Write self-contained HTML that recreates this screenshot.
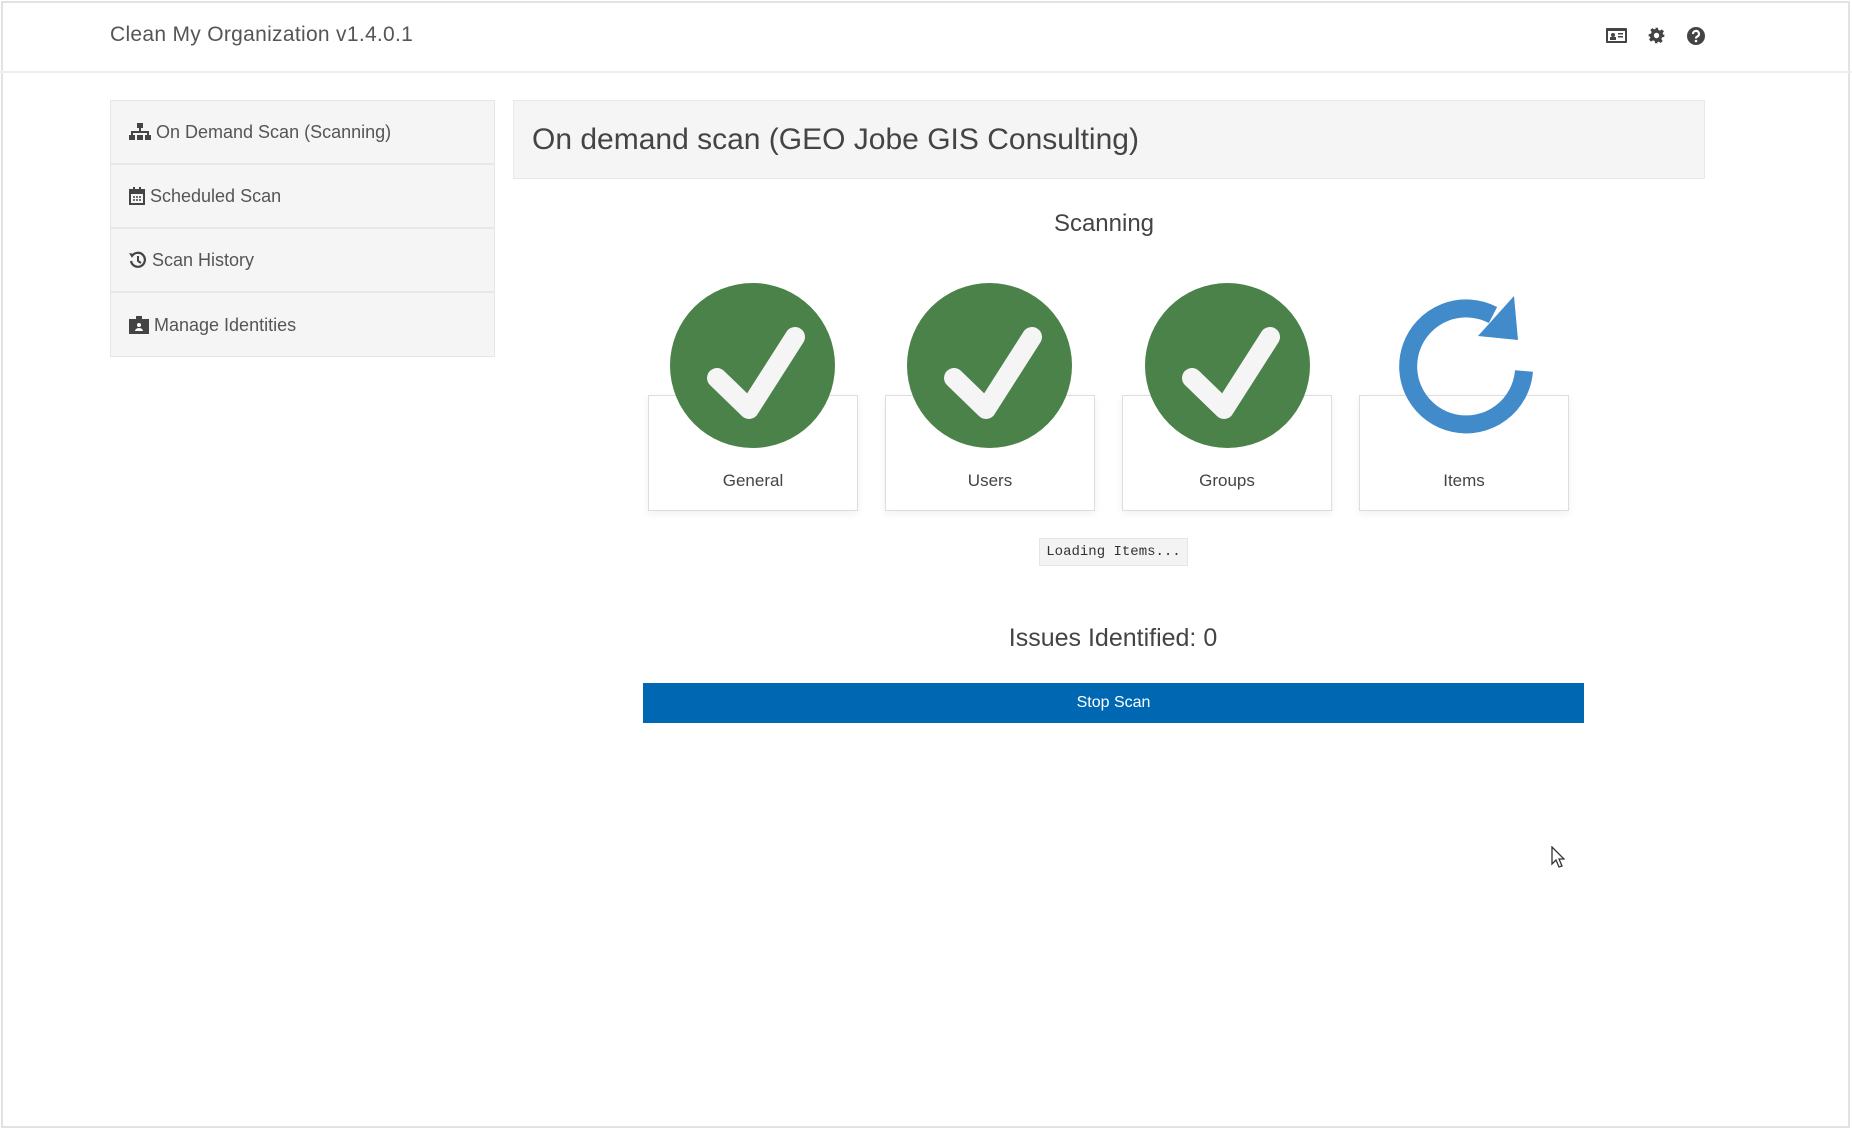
<!DOCTYPE html>
<html><head><meta charset="utf-8"><style>
*{margin:0;padding:0;box-sizing:border-box}
body{width:1852px;height:1129px;background:#fff;font-family:"Liberation Sans",sans-serif;color:#444;position:relative;overflow:hidden}
.frame{position:absolute;left:1px;top:1px;width:1849px;height:1127px;border:2px solid #e2e2e2}
.hdr{position:absolute;left:0;top:71px;width:1852px;height:2px;background:#eee}
.title{position:absolute;left:110px;top:23px;font-size:21px;color:#555;letter-spacing:0.3px}
.side{position:absolute;left:110px;top:100px;width:385px;height:257px;background:#f5f5f5;border:1px solid #e6e6e6}
.side div{height:64px;border-bottom:2px solid #e8e8e8;font-size:18px;color:#555;padding-left:18px;display:flex;align-items:center;gap:5px}
.side div:last-child{border-bottom:none}
.panel{position:absolute;left:513px;top:100px;width:1192px;height:79px;background:#f5f5f5;border:1px solid #e8e8e8;font-size:30px;color:#444;padding:22px 0 0 18px}
.c{position:absolute;text-align:center}
.card{position:absolute;top:395px;width:210px;height:116px;border:1px solid #ddd;background:#fff;box-shadow:0 3px 8px rgba(0,0,0,.06)}
.card span{position:absolute;top:75px;left:0;width:100%;text-align:center;font-size:17px;color:#444}
.circ{position:absolute;top:283px;width:165px;height:165px;border-radius:50%;background:#4a8249}
.btn{position:absolute;left:643px;top:683px;width:941px;height:40px;background:#0068b3;color:#fff;font-size:16px;text-align:center;line-height:40px}
.load{position:absolute;left:1039px;top:538px;width:149px;height:28px;background:#f3f3f3;border:1px solid #e5e5e5;font-family:"Liberation Mono",monospace;font-size:14px;line-height:26px;text-align:center;color:#333}
</style></head><body>
<div class="frame"></div>
<div class="hdr"></div>
<div class="title">Clean My Organization v1.4.0.1</div>
<svg style="position:absolute;left:1606px;top:28px" width="21" height="15" viewBox="0 0 21 15"><rect x="0" y="0" width="21" height="15" rx="1" fill="#444"/><rect x="2" y="3" width="17" height="10" fill="#fff"/><circle cx="7" cy="7" r="2" fill="#444"/><rect x="4" y="9" width="6" height="3" fill="#444"/><rect x="12" y="5" width="5" height="1.5" fill="#444"/><rect x="12" y="8" width="5" height="1.5" fill="#444"/></svg>
<svg style="position:absolute;left:1648px;top:27px" width="17" height="17" viewBox="0 0 24 24"><path fill="#444" d="M10 1h4l.6 3.2 2.4 1 2.7-1.9 2.8 2.8-1.9 2.7 1 2.4L23 10v4l-3.2.6-1 2.4 1.9 2.7-2.8 2.8-2.7-1.9-2.4 1L14 23h-4l-.6-3.2-2.4-1-2.7 1.9-2.8-2.8 1.9-2.7-1-2.4L1 14v-4l3.2-.6 1-2.4-1.9-2.7 2.8-2.8 2.7 1.9 2.4-1z"/><circle cx="12" cy="12" r="3.8" fill="#fff"/></svg>
<svg style="position:absolute;left:1687px;top:27px" width="18" height="18" viewBox="0 0 18 18"><circle cx="9" cy="9" r="9" fill="#444"/><path d="M6 7a3 3 0 1 1 4 2.7c-.8.4-1 .8-1 1.8" stroke="#fff" stroke-width="2.2" fill="none"/><circle cx="9" cy="14" r="1.3" fill="#fff"/></svg>
<div class="side">
<div><svg width="22" height="18" viewBox="0 0 22 18"><rect x="8" y="0" width="6" height="5" fill="#444"/><path d="M11 5v4M3 12V9h16v3" stroke="#444" stroke-width="2" fill="none"/><rect x="0" y="12" width="6" height="5" fill="#444"/><rect x="8" y="12" width="6" height="5" fill="#444"/><rect x="16" y="12" width="6" height="5" fill="#444"/></svg>On Demand Scan (Scanning)</div>
<div><svg width="16" height="18" viewBox="0 0 16 18"><rect x="1" y="3" width="14" height="14" fill="none" stroke="#444" stroke-width="2"/><rect x="1" y="3" width="14" height="4" fill="#444"/><rect x="4" y="0" width="2" height="4" fill="#444"/><rect x="10" y="0" width="2" height="4" fill="#444"/><path d="M4 10h2M7 10h2M10 10h2M4 13h2M7 13h2M10 13h2" stroke="#444" stroke-width="1.5"/></svg>Scheduled Scan</div>
<div><svg width="18" height="18" viewBox="0 0 18 18"><path d="M3 5a7 7 0 1 1-1 5" stroke="#444" stroke-width="2.2" fill="none"/><path d="M0 2l5 1-2 4z" fill="#444"/><path d="M9 5v5l3 2" stroke="#444" stroke-width="2" fill="none"/></svg>Scan History</div>
<div><svg width="20" height="18" viewBox="0 0 20 18"><rect x="0" y="3" width="20" height="15" fill="#444"/><rect x="7" y="0" width="6" height="5" fill="#444"/><circle cx="10" cy="9" r="2" fill="#fff"/><path d="M6 15a4 3 0 0 1 8 0z" fill="#fff"/></svg>Manage Identities</div>
</div>
<div class="panel">On demand scan (GEO Jobe GIS Consulting)</div>
<div class="c" style="left:904px;top:210px;width:400px;font-size:24px;color:#444">Scanning</div>
<div class="card" style="left:648px"><span>General</span></div>
<div class="card" style="left:885px"><span>Users</span></div>
<div class="card" style="left:1122px"><span>Groups</span></div>
<div class="card" style="left:1359px"><span>Items</span></div>
<div class="circ" style="left:670px"></div>
<div class="circ" style="left:907px"></div>
<div class="circ" style="left:1145px"></div>
<svg style="position:absolute;left:670px;top:283px" width="640" height="165">
<g fill="none" stroke="#f5f5f5" stroke-width="20" stroke-linecap="round" stroke-linejoin="round">
<path d="M47 95l32 31 46-72"/>
<path d="M284 95l32 31 46-72"/>
<path d="M522 95l32 31 46-72"/>
</g></svg>
<svg style="position:absolute;left:1390px;top:290px" width="150" height="150" viewBox="0 0 150 150">
<path d="M134 81A58 58 0 1 1 103 25" fill="none" stroke="#428bca" stroke-width="18"/>
<path d="M124 6l4 44-40-4z" fill="#428bca"/>
</svg>
<div class="load">Loading Items...</div>
<div class="c" style="left:913px;top:624px;width:400px;font-size:25px;color:#444">Issues Identified: 0</div>
<div class="btn">Stop Scan</div>
<svg style="position:absolute;left:1551px;top:846px" width="14" height="22" viewBox="0 0 14 22"><path d="M1 1v17l4-4 3 7 3-1-3-7h5z" fill="#fff" stroke="#333" stroke-width="1.3"/></svg>
</body></html>
